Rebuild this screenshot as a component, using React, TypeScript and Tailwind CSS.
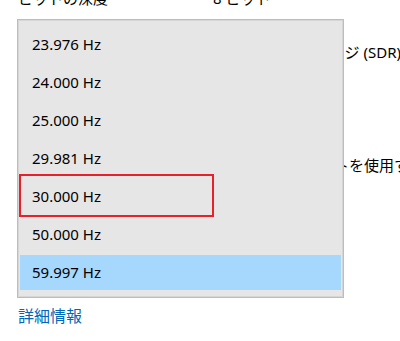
import React from "react";

const rates = [
  "23.976 Hz",
  "24.000 Hz",
  "25.000 Hz",
  "29.981 Hz",
  "30.000 Hz",
  "50.000 Hz",
  "59.997 Hz",
];

export default function App() {
  return (
    <div
      className="relative w-[400px] h-[341px] overflow-hidden bg-white text-black"
      style={{ fontFamily: '"Noto Sans", "Noto Sans CJK JP", sans-serif' }}
    >
      {/* Background page content */}
      <div className="flex flex-col pl-[18px] -mt-[13px]">
        <div className="flex h-[22px] items-center text-[15px] leading-none text-[#000]">
          <span className="w-[195px]">ビットの深度</span>
          <span>8 ビット</span>
        </div>
        <div className="flex justify-end h-[51px] items-end text-[15px] leading-none">
          <span className="whitespace-nowrap -mr-[1px]">ダイナミック レンジ (SDR)</span>
        </div>
        <div className="flex justify-end h-[113px] items-end text-[15px] leading-none">
          <span className="whitespace-nowrap -mr-[9px]">サポートを使用す</span>
        </div>
        <div className="mt-[135px] text-[16px] leading-none text-[#0067b8]">詳細情報</div>
      </div>

      {/* Dropdown popup */}
      <div className="absolute left-[17px] top-[19px] w-[327px] h-[279px] border border-[#bdbdbd] bg-[#e6e6e6] shadow-[inset_0_0_0_1px_#d6d6d6]">
        <div className="flex flex-col pt-[5px] px-[2px]">
          {rates.map((r, i) => (
            <div key={r} className="h-[38px] flex items-center">
              <div
                className={
                  i === 6
                    ? "w-full h-[35px] flex items-center pl-[12px] bg-[#a6d7fd] text-[15px]"
                    : "w-full h-[35px] flex items-center pl-[12px] text-[15px]"
                }
              >
                {r}
              </div>
            </div>
          ))}
        </div>
        {/* Red highlight box */}
        <div className="absolute left-[1px] top-[154px] w-[195px] h-[43px] border-2 border-[#e8202a]" />
      </div>
    </div>
  );
}
